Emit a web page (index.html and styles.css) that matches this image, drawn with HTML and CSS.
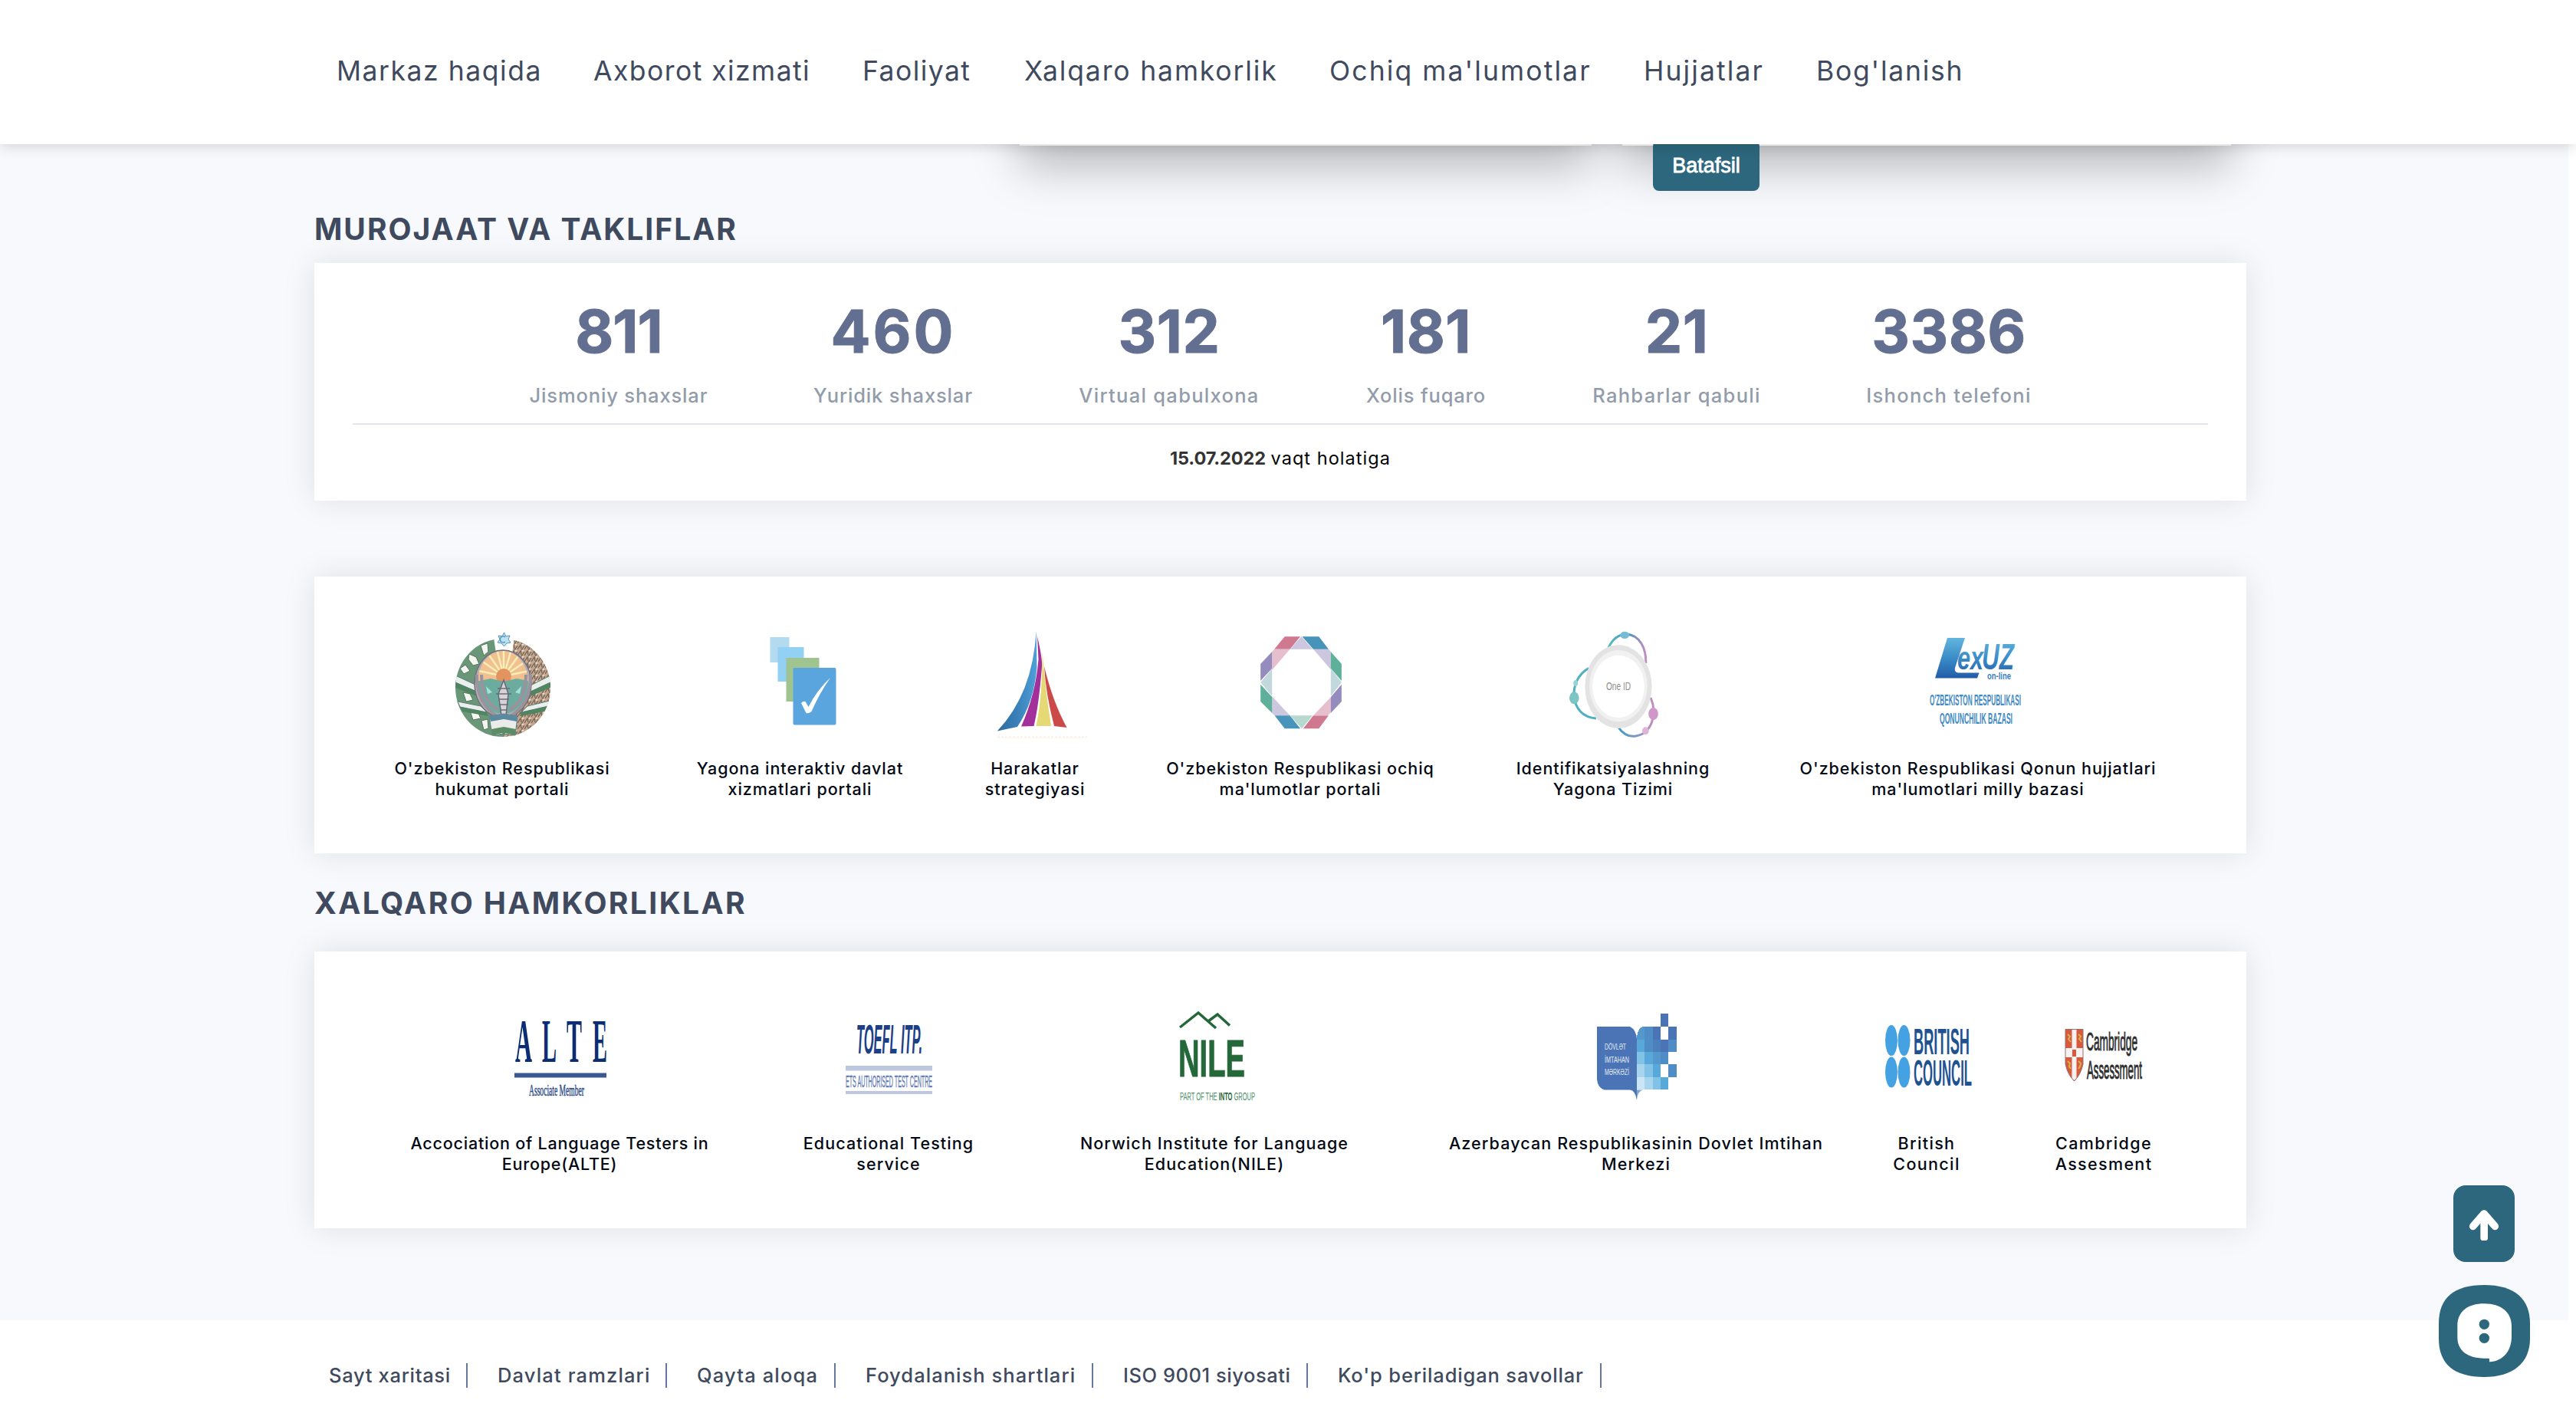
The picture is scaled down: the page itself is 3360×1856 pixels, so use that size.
FILE: index.html
```html
<!DOCTYPE html>
<html lang="uz">
<head>
<meta charset="utf-8">
<title>Markaz</title>
<link rel="stylesheet" href="styles.css">
</head>
<body>
<header class="header">
  <nav class="nav">
    <a>Markaz haqida</a><a>Axborot xizmati</a><a>Faoliyat</a><a>Xalqaro hamkorlik</a><a>Ochiq ma'lumotlar</a><a>Hujjatlar</a><a>Bog'lanish</a>
  </nav>
</header>

<main class="main">
  <div class="news">
    <div class="news-card news-card-left"></div>
    <div class="news-card news-card-right"><a class="more">Batafsil</a></div>
  </div>

  <h2 class="title title-first">MUROJAAT VA TAKLIFLAR</h2>
  <section class="card stats-card">
    <div class="stats">
      <div class="stat"><b>811</b><span>Jismoniy shaxslar</span></div>
      <div class="stat"><b>460</b><span>Yuridik shaxslar</span></div>
      <div class="stat"><b>312</b><span>Virtual qabulxona</span></div>
      <div class="stat"><b>181</b><span>Xolis fuqaro</span></div>
      <div class="stat"><b>21</b><span>Rahbarlar qabuli</span></div>
      <div class="stat"><b>3386</b><span>Ishonch telefoni</span></div>
    </div>
    <p class="date"><b>15.07.2022</b> <span>vaqt holatiga</span></p>
  </section>

  <section class="card links links-state">
    <a class="link">
      <svg class="logo" viewBox="584 823 140 140">
        <defs><clipPath id="oval"><ellipse cx="656" cy="890" rx="33" ry="41"/></clipPath>
        <clipPath id="wreath"><ellipse cx="656" cy="897" rx="62" ry="64"/></clipPath>
        <pattern id="wheat" width="9" height="8" patternUnits="userSpaceOnUse"><rect width="9" height="8" fill="#c4a88e"/><path d="M0 7L4 1L5 6M5 8L9 2" stroke="#75645c" stroke-width="1.3" fill="none"/><path d="M6 1L8 0" stroke="#f3e2cf" stroke-width="2"/></pattern></defs>
        <g clip-path="url(#wreath)">
          <path d="M594 833H657V961H594Z" fill="#6b9779"/>
          <path d="M657 833H720V961H657Z" fill="url(#wheat)"/>
          <g fill="#f4f6f0" stroke="#54755f" stroke-width="1"><path d="M627 842l9-3 1 11-6 5zM612 853l9 4 4 9-8 2-6-8zM600 872l7-5 6 8-8 4zM604 903l9 2 4 8-9 2zM613 927l10 1 4 9-10 2zM628 940l8-2 1 12-6 2z"/></g>
          <path d="M594 881L622 894V902L594 890ZM720 880L692 894V902L720 889Z" fill="#e8efed" stroke="#607b78"/>
          <path d="M594 890L622 902V908L594 897ZM720 889L692 902V908L720 896Z" fill="#4f8560"/>
          <path d="M597 915L627 921L635 929L600 922ZM717 914L688 921L680 929L715 921Z" fill="#e8efed" stroke="#607b78"/>
          <path d="M600 922L635 929L637 934L603 928ZM715 921L680 929L678 934L711 928Z" fill="#4f8560"/>
        </g>
        <path d="M644 832L657 826L671 832L668 852H647Z" fill="#fff"/>
        <ellipse cx="656" cy="892" rx="37" ry="44" fill="#b5adb3" stroke="#70707a" stroke-width="1.5"/>
        <g clip-path="url(#oval)">
          <path d="M620 845H694V890H620Z" fill="#f1c091"/>
          <path d="M657 882L628 862M657 882L637 853M657 882L648 847M657 882L657 845M657 882L667 847M657 882L678 853M657 882L687 862M657 882L625 875M657 882L690 875" stroke="#f9efb4" stroke-width="2.5"/>
          <circle cx="657" cy="882" r="10" fill="#e3935f"/>
          <path d="M620 889L640 885L657 889L674 885L694 889V936H620Z" fill="#6bac9f"/>
          <path d="M634 895l8 8-6 2zM680 895l-8 8 6 2z" fill="#a6e0da"/>
        </g>
        <path d="M622 880Q621 918 650 935M692 880Q693 918 664 935M628 880Q628 914 650 926M686 880Q686 914 664 926" fill="none" stroke="#9a939d" stroke-width="4"/>
        <path d="M657 887L663 905L660 933H654L650 905Z" fill="#d8d4d6" stroke="#666877" stroke-width="1.5"/>
        <path d="M649 898H665M647 905H667M650 912H664M651 919H663M653 926H661" stroke="#6a6c7a" stroke-width="1.5"/>
        <path d="M657.500 825L660 830L665 829L663 834L666 838L661 839L657.500 843L654 839L649 838L652 834L650 829L655 830Z" fill="#bfe2f3" stroke="#5795b5"/>
        <path d="M659 831a4 4 0 1 0 0 6" fill="none" stroke="#4a94bd" stroke-width="1.5"/>
        <path d="M638 934L657 931L675 934L672 959L657 957L642 959Z" fill="#e9ece8" stroke="#647c80"/>
        <path d="M638 934L657 931L675 934L674 941L657 938L640 941Z" fill="#5b8aa0"/>
        <path d="M641 951L657 948L673 951L672 959L659 956L657 961L655 956L642 959Z" fill="#5b8c66"/>
      </svg>
      <span>O'zbekiston Respublikasi<br>hukumat portali</span>
    </a>
    <a class="link">
      <svg class="logo" viewBox="972.500 823 140 140">
        <rect x="1004" y="831" width="25" height="33" fill="#b4daf0"/>
        <rect x="1014" y="844" width="34" height="45" fill="#92d0f4"/>
        <rect x="1025" y="858" width="43" height="57" fill="#a0c490"/>
        <rect x="1034" y="871" width="56" height="74.500" rx="2" fill="#5ba5df"/>
        <path d="M1044.500 917Q1047 914 1050 915L1054 922Q1065 900 1082.500 884Q1068 905 1058 928Q1054 931 1051 930Z" fill="#fff"/>
      </svg>
      <span>Yagona interaktiv davlat<br>xizmatlari portali</span>
    </a>
    <a class="link">
      <svg class="logo" viewBox="1280 823 140 140">
        <defs><linearGradient id="sail" x1="0" y1="0" x2="1" y2="0"><stop offset="0" stop-color="#2c6c9e"/><stop offset=".5" stop-color="#3a80b8"/><stop offset="1" stop-color="#4fa0da"/></linearGradient></defs>
        <path d="M1352.600 823Q1348 905 1301.800 953.500L1328 948Q1350 915 1353.500 870Z" fill="url(#sail)"/>
        <path d="M1354 830Q1361 860 1360 870Q1356 920 1349.500 947L1333 947.500Q1352 905 1355.500 860Z" fill="#a3309a"/>
        <path d="M1360.500 850L1362.500 872Q1366 910 1372 947H1352.500Q1361 905 1360.500 850Z" fill="#e4d974"/>
        <path d="M1363 869Q1374 915 1392.500 949L1376 947Q1365 905 1363 869Z" fill="#cb4a48"/>
        <path d="M1302 961.500H1419" stroke="#f9efe8" stroke-width="2" stroke-dasharray="3 2"/>
      </svg>
      <span>Harakatlar<br>strategiyasi</span>
    </a>
    <a class="link">
      <svg class="logo" viewBox="1625 823 140 140">
        <g transform="translate(1460 790) scale(.4847 .3333)">
          <path d="M445 121H487L459 170H417ZM522 430H563L537 481H495Z" fill="#ce7990"/>
          <path d="M417 170H459L411 252V180ZM569 358V418L561 430H522Z" fill="#e6bfce"/>
          <path d="M490 121L520 170H459ZM522 170H563L569 180V250ZM411 355V420L418 430H459Z" fill="#ccc6df"/>
          <path d="M492 121H537L563 170H522ZM418 430H459L487 481H445Z" fill="#4893ba"/>
          <path d="M569 180L598 228V294L569 245ZM380 308L411 357V420L380 375Z" fill="#5fb09a"/>
          <path d="M569 245L598 300L569 354ZM380 300L411 247V354Z" fill="#c2d8dc"/>
          <path d="M598 308V375L569 420V358ZM411 180V245L380 294V228Z" fill="#968bbd"/>
          <path d="M459 430H520L491 481Z" fill="#b6d8cf"/>
        </g>
      </svg>
      <span>O'zbekiston Respublikasi ochiq<br>ma'lumotlar portali</span>
    </a>
    <a class="link">
      <svg class="logo" viewBox="2033 823 140 140">
        <defs><linearGradient id="arcA"><stop offset="0" stop-color="#5cc0b8"/><stop offset=".5" stop-color="#4596c0"/><stop offset="1" stop-color="#c58cc2"/></linearGradient>
        <linearGradient id="arcB" x1="0" y1="0" x2="1" y2="0"><stop offset="0" stop-color="#3f9ec4"/><stop offset="1" stop-color="#c58cc2"/></linearGradient></defs>
        <g transform="translate(1460 790) scale(.4847 .3333)">
          <g fill="none" class="arc">
            <path d="M1315 168C1330 120 1350 112 1365 112C1400 115 1418 165 1417 225" stroke="url(#arcA)"/>
            <path d="M1263 245C1205 290 1210 435 1283 441" stroke="#4fb0bf"/>
            <path d="M1430 360C1450 430 1430 500 1390 510C1370 515 1355 500 1344 478" stroke="url(#arcB)"/>
          </g>
          <ellipse cx="1360" cy="115" rx="12" ry="14" fill="#76bdd3"/>
          <ellipse cx="1228" cy="303" rx="6" ry="12" fill="#9bd2d2"/>
          <ellipse cx="1224" cy="361" rx="13" ry="24" fill="#7cc5c3"/>
          <ellipse cx="1437" cy="423" rx="13" ry="24" fill="#cf98c8"/>
          <ellipse cx="1416" cy="490" rx="9" ry="15" fill="#e0b4d8"/>
          <ellipse cx="1343" cy="317" rx="90" ry="163" fill="#e3e3e3"/>
          <ellipse cx="1343" cy="314" rx="78" ry="140" fill="#f1f1f1"/>
          <ellipse cx="1343" cy="316" rx="70" ry="122" fill="#fff"/>
        </g>
        <text x="2095" y="900" class="sans" font-size="14" fill="#8c8c8c" textLength="32" lengthAdjust="spacingAndGlyphs">One ID</text>
      </svg>
      <span>Identifikatsiyalashning<br>Yagona Tizimi</span>
    </a>
    <a class="link">
      <svg class="logo" viewBox="2509 823 140 140">
        <defs><linearGradient id="lex" gradientUnits="userSpaceOnUse" x1="0" y1="832" x2="0" y2="885"><stop offset="0" stop-color="#62b6dd"/><stop offset=".5" stop-color="#3a8cc8"/><stop offset="1" stop-color="#225ba6"/></linearGradient></defs>
        <path d="M2540 832H2563L2550 871Q2549 877 2554 877.500H2581.500L2579 884.500H2524Z" fill="url(#lex)"/>
        <text x="2553" y="873" class="sans heavy slant" font-size="43" fill="url(#lex)" textLength="34" lengthAdjust="spacingAndGlyphs">ex</text>
        <text x="2585" y="873" class="sans heavy slant" font-size="48" fill="url(#lex)" textLength="42" lengthAdjust="spacingAndGlyphs">UZ</text>
        <text x="2592" y="885.500" class="sans heavy" font-size="13" fill="#3d7fbd" textLength="31" lengthAdjust="spacingAndGlyphs">on-line</text>
        <text x="2517" y="920" class="sans heavy" font-size="20" fill="#4189c1" textLength="119" lengthAdjust="spacingAndGlyphs">O'ZBEKISTON RESPUBLIKASI</text>
        <text x="2530" y="944" class="sans heavy" font-size="20" fill="#4189c1" textLength="95" lengthAdjust="spacingAndGlyphs">QONUNCHILIK BAZASI</text>
      </svg>
      <span>O'zbekiston Respublikasi Qonun hujjatlari<br>ma'lumotlari milly bazasi</span>
    </a>
  </section>

  <h2 class="title title-second">XALQARO HAMKORLIKLAR</h2>
  <section class="card links links-partners">
    <a class="link">
      <svg class="logo" viewBox="659 1312 140 140" fill="#0d2d73">
        <g class="serif heavy" font-size="80">
          <text x="672" y="1385" textLength="22" lengthAdjust="spacingAndGlyphs">A</text>
          <text x="707" y="1385" textLength="19" lengthAdjust="spacingAndGlyphs">L</text>
          <text x="739" y="1385" textLength="20" lengthAdjust="spacingAndGlyphs">T</text>
          <text x="773" y="1385" textLength="19" lengthAdjust="spacingAndGlyphs">E</text>
        </g>
        <path d="M671 1399.500H791V1405.500H671Z" fill="#3a5993"/>
        <text x="690" y="1429" class="serif" font-size="22" fill="#2c4a86" stroke="#2c4a86" stroke-width=".5" textLength="72" lengthAdjust="spacingAndGlyphs">Associate Member</text>
      </svg>
      <span>Accociation of Language Testers in<br>Europe(ALTE)</span>
    </a>
    <a class="link">
      <svg class="logo" viewBox="1088 1312 140 140">
        <text x="1117" y="1374" class="sans heavy slant" font-size="54" fill="#1c3f87" textLength="86" lengthAdjust="spacingAndGlyphs">TOEFL ITP.</text>
        <path d="M1103 1390H1216V1396.500H1103ZM1103 1423H1216V1427H1103Z" fill="#bdc7df"/>
        <text x="1103" y="1418" class="sans" font-size="22" fill="#5f7bb5" stroke="#5f7bb5" stroke-width=".4" textLength="113" lengthAdjust="spacingAndGlyphs">ETS AUTHORISED TEST CENTRE</text>
      </svg>
      <span>Educational Testing<br>service</span>
    </a>
    <a class="link">
      <svg class="logo" viewBox="1513 1312 140 140" fill="#24683a">
        <path d="M1539 1340L1563 1321L1586 1341M1576 1332L1588 1323L1604 1337.500" fill="none" stroke="#24683a" stroke-width="3.500"/>
        <text x="1537" y="1404" class="sans heavy" font-size="68" textLength="87" lengthAdjust="spacingAndGlyphs" stroke="#24683a">NILE</text>
        <text x="1539" y="1435" class="sans" font-size="14" textLength="98" lengthAdjust="spacingAndGlyphs" fill="#4c8f69">PART OF THE <tspan font-weight="700" fill="#24683a">INTO</tspan> GROUP</text>
      </svg>
      <span>Norwich Institute for Language<br>Education(NILE)</span>
    </a>
    <a class="link">
      <svg class="logo" viewBox="2063 1312 140 140">
        <g transform="translate(1380 1290) scale(.5741 .3333)" shape-rendering="crispEdges">
          <path d="M1369 97h18v50h-18zM1351 147h18v50h-18zM1387 147h18v50h-18zM1369 197h18v49h-18z" fill="#4a74b5"/>
          <path d="M1351 197h18v49h-18z" fill="#4b80bd"/>
          <path d="M1333 147h18v50h-18zM1333 197h18v49h-18zM1387 197h18v49h-18zM1369 246h18v49h-18zM1387 295h18v50h-18z" fill="#508dc6"/>
          <path d="M1315 190Q1317 152 1330 147H1333V197H1315ZM1351 246h18v49h-18z" fill="#5498cd"/>
          <path d="M1315 197h18v49h-18zM1333 246h18v49h-18zM1351 295h18v50h-18zM1369 345h18v49h-18z" fill="#59a8da"/>
          <path d="M1315 246h18v49h-18zM1333 295h18v50h-18zM1351 345h18v49h-18z" fill="#81c3e7"/>
          <path d="M1315 295h18v50h-18zM1333 345h18v49h-18z" fill="#a7d5ee"/>
          <path d="M1315 345h18v49h-18z" fill="#cae5f5"/>
        </g>
        <path d="M2083 1339H2126Q2134 1343 2135 1355V1435Q2133 1422 2126 1421.500H2093Q2084 1419 2083 1408Z" fill="#4a74b5"/>
        <path d="M2135 1435Q2136 1423 2143 1421.500H2135Z" fill="#81a8d4"/>
        <g class="sans" font-size="11" fill="#e3ebf6">
          <text x="2093" y="1369" textLength="28" lengthAdjust="spacingAndGlyphs">DÖVLƏT</text>
          <text x="2093" y="1385.500" textLength="32" lengthAdjust="spacingAndGlyphs">İMTAHAN</text>
          <text x="2093" y="1402" textLength="32" lengthAdjust="spacingAndGlyphs">MƏRKƏZİ</text>
        </g>
      </svg>
      <span>Azerbaycan Respublikasinin Dovlet Imtihan<br>Merkezi</span>
    </a>
    <a class="link">
      <svg class="logo" viewBox="2442 1312 140 140">
        <g fill="#45a2e2"><ellipse cx="2467" cy="1357" rx="8" ry="20"/><ellipse cx="2483.500" cy="1357" rx="8" ry="20"/><ellipse cx="2467" cy="1398.500" rx="8" ry="20"/><ellipse cx="2483.500" cy="1398.500" rx="8" ry="20"/></g>
        <g class="sans heavy" font-size="48" fill="#1f5291">
          <text x="2496" y="1374.500" textLength="73" lengthAdjust="spacingAndGlyphs">BRITISH</text>
          <text x="2496" y="1416" textLength="76" lengthAdjust="spacingAndGlyphs">COUNCIL</text>
        </g>
      </svg>
      <span>British<br>Council</span>
    </a>
    <a class="link">
      <svg class="logo" viewBox="2673 1312 140 140">
        <path d="M2694 1342.500H2717V1388Q2714 1402 2705.500 1410Q2697 1402 2694 1388Z" fill="#d8593c" stroke="#8d7470"/>
        <path d="M2702.500 1343H2708.500V1406L2705.500 1409L2702.500 1406ZM2694.500 1367H2716.500V1379H2694.500Z" fill="#f7f2f2"/>
        <path d="M2703 1369H2708V1378H2703Z" fill="#d8593c"/>
        <path d="M2697 1349l3 3-2 3 3 4M2711 1349l3 3-2 3 3 4M2697 1384l3 3-1 4 2 3M2711 1384l3 3-1 4-2 3" fill="none" stroke="#d9b04a" stroke-width="2"/>
        <g class="sans" fill="#2d2d2d" stroke="#2d2d2d">
          <text x="2721" y="1370" font-size="34" textLength="67" lengthAdjust="spacingAndGlyphs">Cambridge</text>
          <text x="2722" y="1406.500" font-size="33" textLength="72" lengthAdjust="spacingAndGlyphs">Assessment</text>
        </g>
      </svg>
      <span>Cambridge<br>Assesment</span>
    </a>
  </section>
</main>

<footer class="footer">
  <a>Sayt xaritasi</a><a>Davlat ramzlari</a><a>Qayta aloqa</a><a>Foydalanish shartlari</a><a>ISO 9001 siyosati</a><a>Ko'p beriladigan savollar</a>
</footer>

<div class="floating">
  <button class="to-top" aria-label="Yuqoriga">
    <svg width="80" height="100" viewBox="0 0 240 300"><path d="M77 160L120 111L163 160" fill="none" stroke="#fff" stroke-width="29" stroke-linecap="round" stroke-linejoin="round"/><path d="M106 120H135V206Q135 216 125 216H116Q106 216 106 206Z" fill="#fff"/></svg>
  </button>
  <button class="chat" aria-label="Chat">
    <svg width="119" height="120" viewBox="0 0 357 360">
      <path d="M0 150C0 50 60 0 178 0C297 0 357 55 357 150V210C357 305 290 360 178 360C60 360 0 310 0 210Z" fill="#2d677d"/>
      <path d="M73 160C73 105 112 73 178 73C245 73 285 108 285 160V200C285 260 250 298 198 301V291Q198 287 194 287H178C110 287 73 255 73 205Z" fill="#fff"/>
      <circle cx="178" cy="154" r="20" fill="#2d677d"/><circle cx="178" cy="208" r="20" fill="#2d677d"/>
    </svg>
  </button>
</div>
</body>
</html>
```
FILE: styles.css
```css
* { box-sizing: border-box; }
body { margin: 0; background: #fff; font-family: "Inter", sans-serif; color: #000; height: 1856px; overflow: hidden; }
h2, p { margin: 0; }

.header { position: relative; z-index: 5; height: 188px; background: #fff; box-shadow: 0 0 20px rgba(0, 0, 0, .2); display: flex; align-items: center; }
.nav { display: grid; grid-template-columns: 335px 351px 211px 398px 410px 225px 200px; padding: 0 0 2px 439px; font-size: 35.5px; line-height: 48px; color: #3f4a5e; white-space: nowrap; letter-spacing: 1.55px; }
.nav a:nth-child(2), .nav a:nth-child(3) { letter-spacing: 1.45px; }
.nav a:nth-child(4) { letter-spacing: 1.85px; }
.nav a:nth-child(5), .nav a:nth-child(6) { letter-spacing: 2.1px; }
.nav a:nth-child(7) { letter-spacing: 1.75px; }

.main { display: flow-root; width: 3350px; height: 1534px; background: #f7f9fd; padding: 0 420px 0 410px; }
.news { display: flex; gap: 40px; margin-top: -180px; padding-left: 920px; height: 182px; }
.news-card { height: 182px; background: #fff; box-shadow: 0 28px 56px rgba(0, 0, 0, .25); }
.news-card-left { width: 746px; }
.news-card-right { position: relative; width: 794px; }
.more { position: absolute; left: 40px; bottom: -59px; width: 139px; height: 66px; border-radius: 8px; background: #2d677d; color: #fff; font: 27px/66px "Liberation Sans", sans-serif; text-align: center; -webkit-text-stroke: .8px #fff; }

.title { height: 48px; font-size: 39px; line-height: 48px; font-weight: 700; color: #3f4a5e; white-space: nowrap; }
.title-first { margin: 85px 0 20px; letter-spacing: 2px; }
.title-second { margin: 41px 0 39px; letter-spacing: 2.4px; }

.card { width: 2520px; background: #fff; box-shadow: 0 0 40px rgba(0, 0, 0, .1); }
.stats-card { height: 310px; padding: 41px 50px 0; }
.stats { display: grid; grid-template-columns: 354px 362px 358px 312px 342px 368px; padding: 0 0 20px 170px; border-bottom: 2px solid #e2e4f1; }
.stat { display: flex; flex-direction: column; align-items: center; gap: 20px; white-space: nowrap; }
.stat b { font-size: 77px; line-height: 96px; color: #636f90; letter-spacing: .5px; -webkit-text-stroke: 1px #636f90; }
.stat:nth-child(1) b { letter-spacing: -1px; }
.stat:nth-child(2) b { letter-spacing: 3px; }
.stat span { font-size: 25.5px; line-height: 32px; font-weight: 500; color: #929caa; letter-spacing: .85px; }
.stat:nth-child(3) span, .stat:nth-child(5) span, .stat:nth-child(6) span { letter-spacing: 1.3px; }
.date { margin-top: 29px; text-align: center; font-size: 23.5px; line-height: 30px; }
.date b { color: #333; letter-spacing: -.1px; }
.date span { letter-spacing: 1.05px; }

.links { display: grid; height: 361px; padding-top: 71px; align-items: start; }
.links-state { margin-top: 99px; padding-left: 45px; grid-template-columns: 400px 377px 236px 456px 360px 592px; }
.links-partners { padding-left: 71px; grid-template-columns: 498px 360px 490px 610px 148px 314px; }
.link { display: flex; flex-direction: column; align-items: center; gap: 26px; }
.link span { font-size: 21.5px; line-height: 27px; font-weight: 500; color: #020814; letter-spacing: .95px; text-align: center; white-space: nowrap; }
.links-partners .link:nth-child(1) span { letter-spacing: .8px; }
.links-partners .link:nth-child(n+2) span { letter-spacing: 1.1px; }
.links-partners .link:nth-child(n+5) span { letter-spacing: 1.35px; }
.logo { display: block; width: 140px; height: 140px; overflow: visible; }
.links .logo { margin-left: -2px; }
.sans { font-family: "Liberation Sans", sans-serif; }
.serif { font-family: "Liberation Serif", serif; }
.heavy { font-weight: 700; }
.slant { font-style: italic; }
.arc path { stroke-width: 3px; vector-effect: non-scaling-stroke; }

.footer { display: flex; gap: 39px; height: 134px; padding: 56px 0 0 429px; font-size: 25.5px; line-height: 32px; font-weight: 500; color: #3f4a5e; white-space: nowrap; letter-spacing: 1.15px; }
.footer a { width: 181px; height: 32px; border-right: 2px solid #66769a; }
.footer a:nth-child(1) { letter-spacing: .7px; }
.footer a:nth-child(2) { width: 221px; }
.footer a:nth-child(3) { width: 181px; }
.footer a:nth-child(4) { width: 297px; letter-spacing: 1.05px; }
.footer a:nth-child(5) { width: 241px; letter-spacing: .55px; }
.footer a:nth-child(6) { width: 344px; letter-spacing: .85px; }

.floating { position: fixed; z-index: 10; right: 60px; bottom: 60px; width: 119px; display: flex; flex-direction: column; align-items: flex-start; gap: 30px; }
.floating button { display: block; padding: 0; border: 0; background: none; }
.floating svg { display: block; }
.floating .to-top { width: 80px; height: 100px; margin-left: 19px; border-radius: 16px; background: #2d677d; }
```
